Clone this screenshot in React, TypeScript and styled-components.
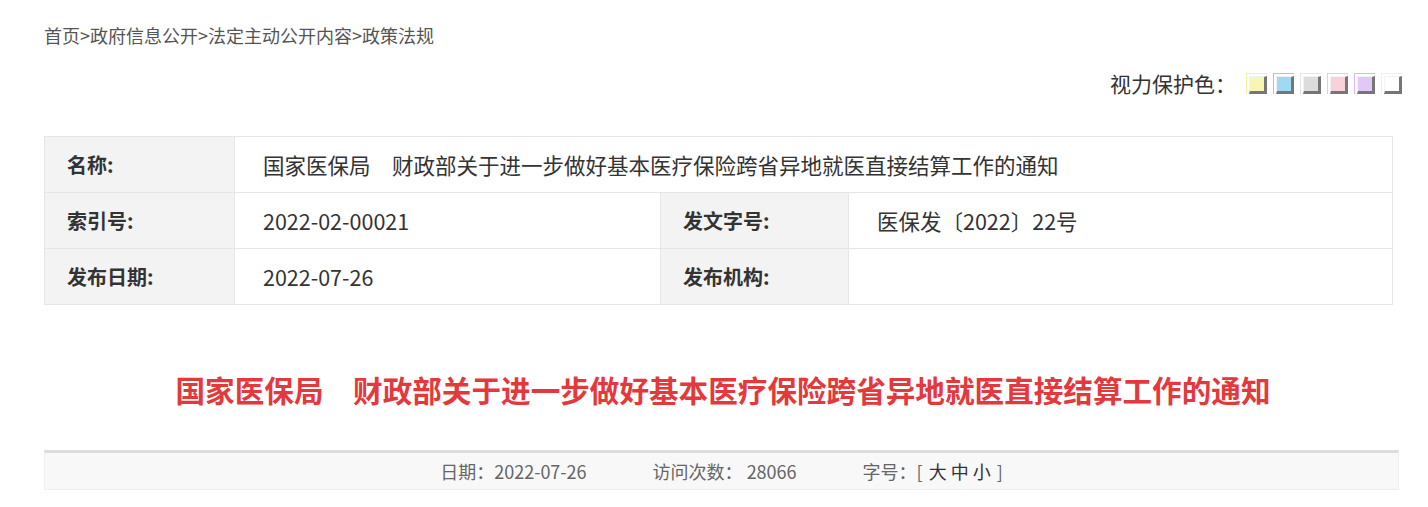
import React from 'react';
import styled, { createGlobalStyle } from 'styled-components';

// ---- constants ----
const COLORS = {
  TEXT: '#333',
  MUTED: '#666',
  BORDER: '#e6e6e6',
  LABEL_BG: '#f3f3f3',
  TITLE: '#e4393c',
};

const SWATCHES = [
  { fill: '#f8f6b4', edge: '#f4f0a0' },
  { fill: '#9fdaf3', edge: '#8fd0ee' },
  { fill: '#dcdcdc', edge: '#e6e6e6' },
  { fill: '#f8d2da', edge: '#f2c8d2' },
  { fill: '#e2c8f6', edge: '#d8b8f0' },
  { fill: '#ffffff', edge: '#eeeeee' },
];

const GlobalStyle = createGlobalStyle`
  body {
    margin: 0;
    background: #fff;
    font-family: "Noto Sans CJK SC", "Liberation Sans", sans-serif;
    color: ${COLORS.TEXT};
  }
`;

// ---- styles ----
const Page = styled.div`
  padding: 0 26px 0 44px;
`;

const Crumbs = styled.div`
  padding-top: 22px;
  font-size: 18px;
  line-height: 26px;
  color: #555;
`;

const VisionBar = styled.div`
  margin-top: 20px;
  height: 30px;
  display: flex;
  align-items: center;
  justify-content: flex-end;
  font-size: 21px;
  color: ${COLORS.TEXT};
`;

const Swatches = styled.div`
  display: flex;
  gap: 6px;
  margin-left: 10px;
`;

const Swatch = styled.span<{ $fill: string; $edge: string }>`
  display: block;
  width: 21px;
  height: 21px;
  border-top: 1px solid ${({ $edge }) => $edge};
  border-left: 1px solid ${({ $edge }) => $edge};
  padding: 2px 0 0 2px;
  box-sizing: border-box;
  cursor: pointer;
  &::after {
    content: '';
    display: block;
    width: 18px;
    height: 18px;
    box-sizing: border-box;
    background: ${({ $fill }) => $fill};
    border-top: 1px solid #f2f2f2;
    border-left: 1px solid #f2f2f2;
    border-right: 3px solid #767676;
    border-bottom: 3px solid #767676;
  }
`;

const InfoTable = styled.div`
  margin-top: 38px;
  width: 1349px;
  display: grid;
  grid-template-columns: 189px 425px 187px 1fr;
  grid-auto-rows: 55px;
  gap: 1px;
  padding: 1px;
  box-sizing: border-box;
  background: ${COLORS.BORDER};
`;

const Label = styled.div`
  background: ${COLORS.LABEL_BG};
  display: flex;
  align-items: center;
  padding-left: 22px;
  font-size: 20px;
  font-weight: 700;
  color: ${COLORS.TEXT};
`;

const Value = styled.div<{ $span?: number }>`
  background: #fff;
  display: flex;
  align-items: center;
  padding-left: 28px;
  font-size: 21.5px;
  color: ${COLORS.TEXT};
  grid-column: span ${({ $span }) => $span || 1};
`;

const Title = styled.h1`
  margin: 65px 0 0;
  text-align: center;
  font-size: 29.6px;
  line-height: 40px;
  font-weight: 700;
  color: ${COLORS.TITLE};
`;

const InfoFooter = styled.div`
  margin: 40px 3px 0 0;
  height: 36px;
  border-top: 3px solid #ddd;
  border-bottom: 1px solid #eee;
  border-left: 1px solid #f0f0f0;
  border-right: 1px solid #f0f0f0;
  background: #f8f8f8;
  display: flex;
  align-items: center;
  justify-content: center;
  gap: 66px;
  font-size: 18px;
  color: ${COLORS.MUTED};
`;

const SizeLink = styled.a`
  color: ${COLORS.TEXT};
  text-decoration: none;
  margin: 0 2px;
  cursor: pointer;
`;

export default function App() {
  return (
    <>
      <GlobalStyle />
      <Page>
        <Crumbs>首页&gt;政府信息公开&gt;法定主动公开内容&gt;政策法规</Crumbs>

        <VisionBar>
          <span>视力保护色：</span>
          <Swatches>
            {SWATCHES.map((s, i) => (
              <Swatch key={i} $fill={s.fill} $edge={s.edge} />
            ))}
          </Swatches>
        </VisionBar>

        <InfoTable>
          <Label>名称:</Label>
          <Value $span={3}>国家医保局　财政部关于进一步做好基本医疗保险跨省异地就医直接结算工作的通知</Value>
          <Label>索引号:</Label>
          <Value>2022-02-00021</Value>
          <Label>发文字号:</Label>
          <Value>医保发〔2022〕22号</Value>
          <Label>发布日期:</Label>
          <Value>2022-07-26</Value>
          <Label>发布机构:</Label>
          <Value />
        </InfoTable>

        <Title>国家医保局　财政部关于进一步做好基本医疗保险跨省异地就医直接结算工作的通知</Title>

        <InfoFooter>
          <span>日期：2022-07-26</span>
          <span>访问次数： 28066</span>
          <span>
            字号：[ <SizeLink>大</SizeLink><SizeLink>中</SizeLink><SizeLink>小</SizeLink> ]
          </span>
        </InfoFooter>
      </Page>
    </>
  );
}
